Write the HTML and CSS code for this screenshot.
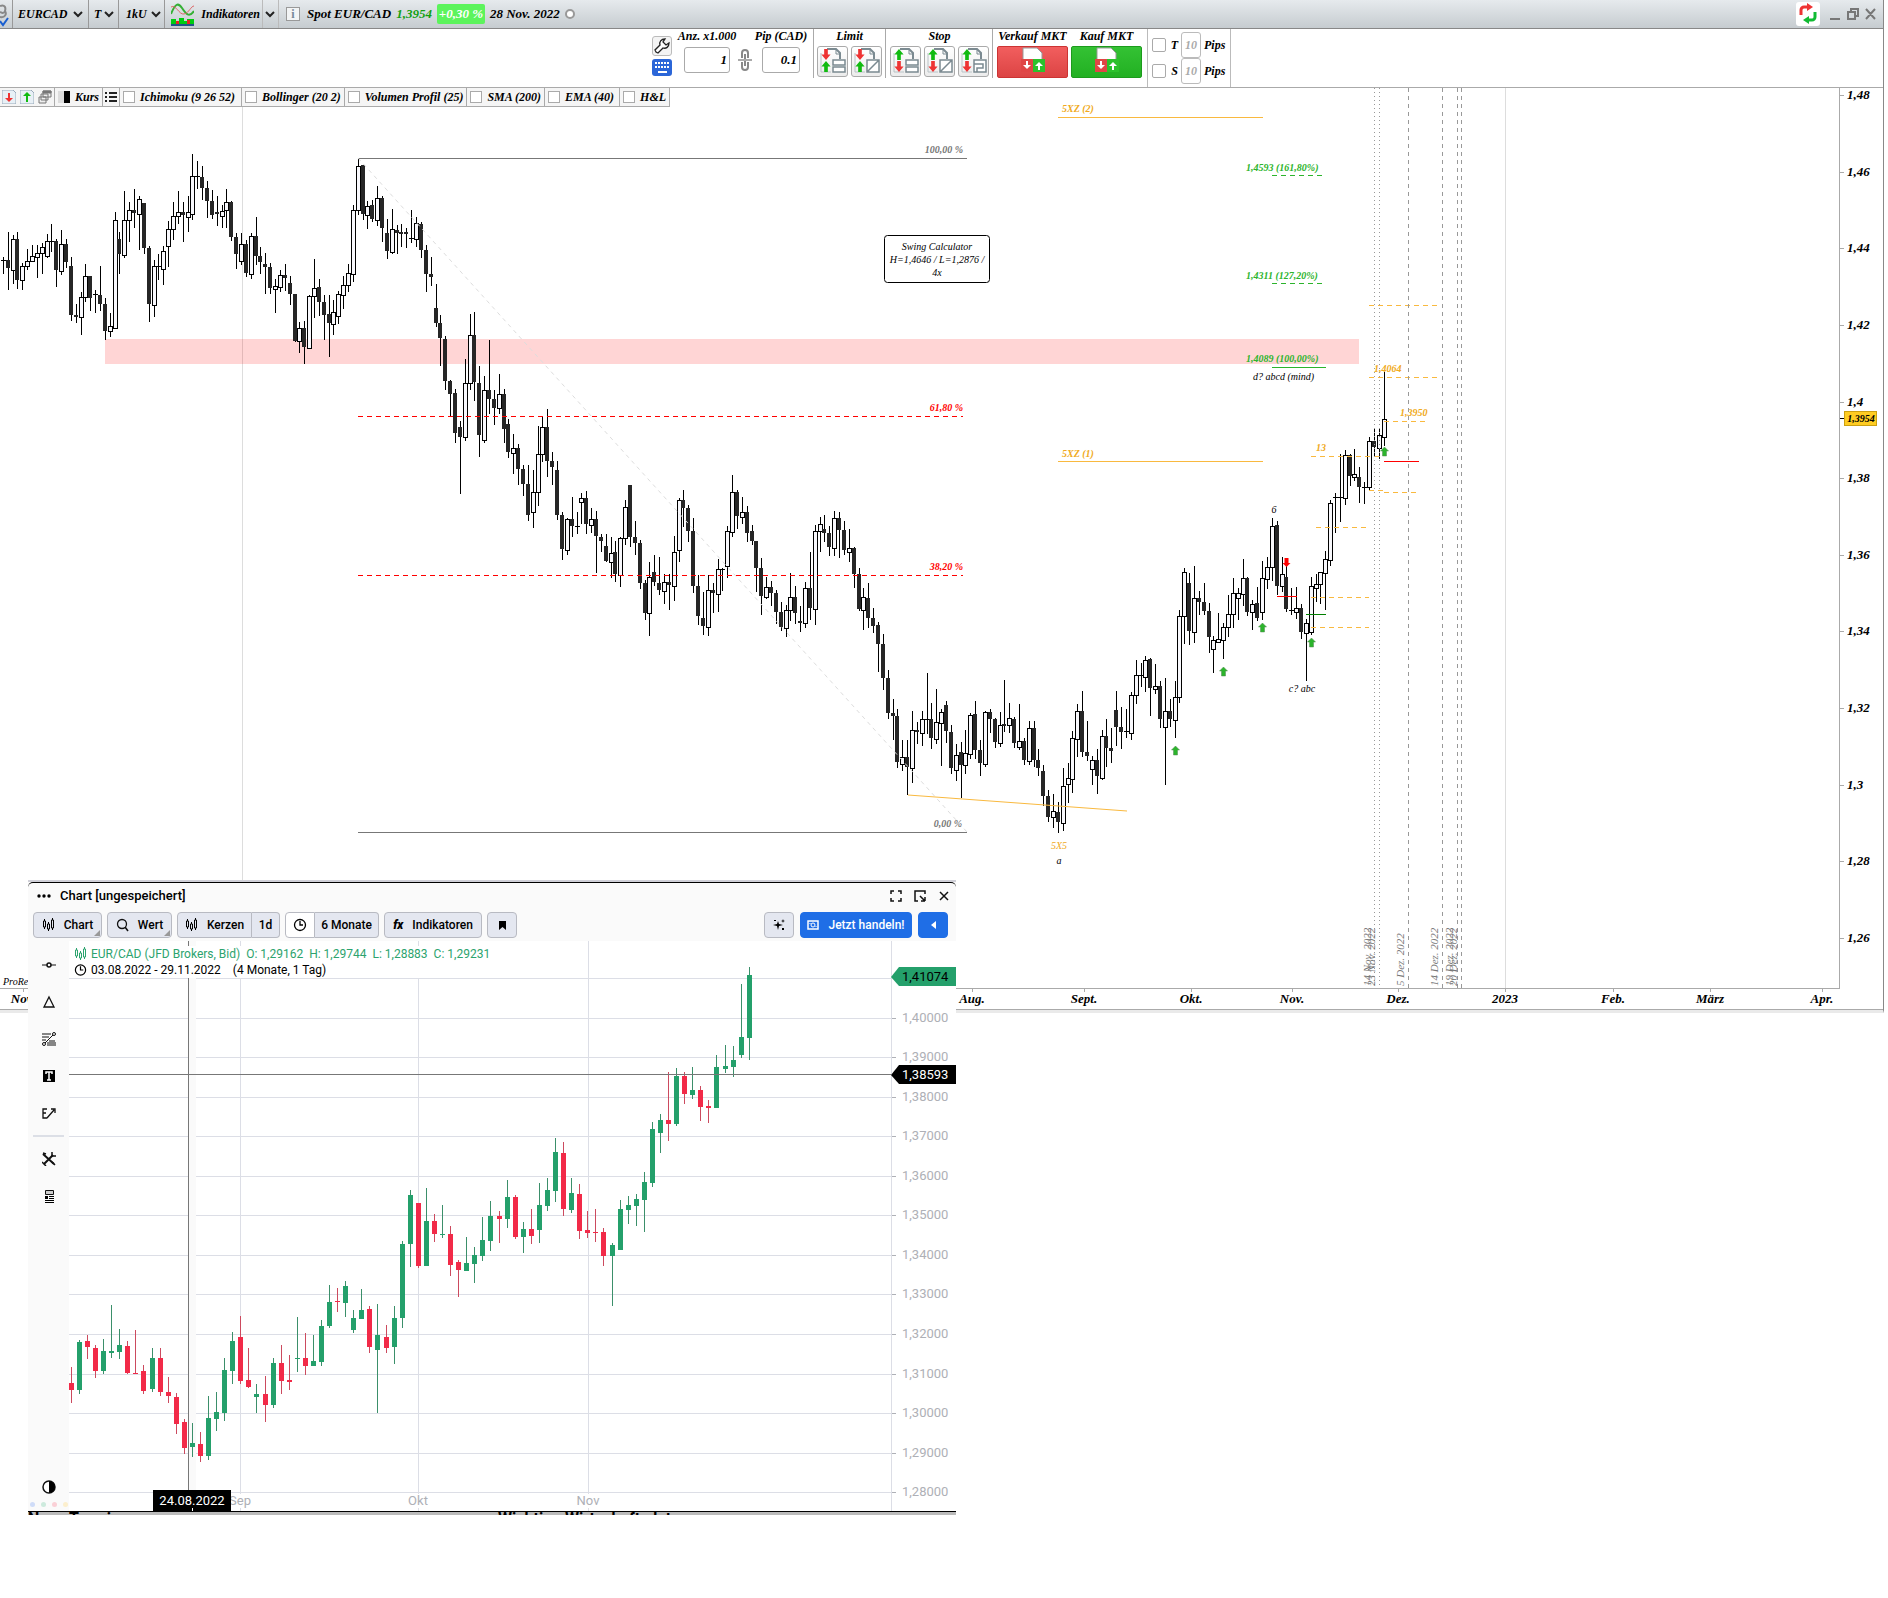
FILE: index.html
```html
<!DOCTYPE html>
<html lang="de">
<head>
    <meta charset="UTF-8">
    <meta name="viewport" content="width=device-width, initial-scale=1.0">
    <title>EURCAD - Spot EUR/CAD</title>
    <link rel="stylesheet" href="styles.css">
</head>
<body>
    <svg class="defs" width="0" height="0" aria-hidden="true">
        <symbol id="i-page" viewBox="0 0 28 28">
            <path d="M8 2h9l4 4v6" fill="none" stroke="#7b8a91" stroke-width="2"/>
            <path d="M17 2v5h5" fill="none" stroke="#7b8a91" stroke-width="1"/>
            <path d="M2 6v19h10" fill="none" stroke="#b9c2c6" stroke-width="1"/>
        </symbol>
        <symbol id="i-up" viewBox="0 0 10 12"><path d="M5 0l5 6H7v6H3V6H0z"/></symbol>
        <symbol id="i-down" viewBox="0 0 10 12"><path d="M5 12l5-6H7V0H3v6H0z"/></symbol>
        <symbol id="i-chev" viewBox="0 0 10 8"><path d="M1 2l4 4 4-4" fill="none" stroke="#222" stroke-width="2"/></symbol>
        <symbol id="i-candles" viewBox="0 0 13 14">
            <path d="M2.500 1v2m0 6v2M6.500 4v2m0 5v2M10.500 0v2m0 8v2" stroke="currentColor"/>
            <path d="M1.500 3h2v6h-2zM5.500 6h2v5h-2zM9.500 2h2v8h-2z" fill="none" stroke="currentColor"/>
        </symbol>
        <symbol id="i-clock" viewBox="0 0 14 14">
            <circle cx="7" cy="7" r="5.500" fill="none" stroke="currentColor" stroke-width="1.300"/>
            <path d="M7 3v4h3" fill="none" stroke="currentColor" stroke-width="1.300"/>
        </symbol>
        <symbol id="i-chain" viewBox="0 0 14 24">
            <path d="M4 10V5a3 3 0 0 1 6 0v5M4 14v5a3 3 0 0 0 6 0v-5M7 6v12" fill="none" stroke="#888" stroke-width="2"/>
            <path d="M0 12h14" stroke="#aaa" stroke-width="2"/>
        </symbol>
        <symbol id="i-mkt" viewBox="0 0 26 26">
            <path d="M3 1h14l5 5v8H3z" fill="#fff" stroke="#999"/>
            <path d="M1 12h12v13H1z" fill="#e04545"/><path d="M13 12h12v13H13z" fill="#2cc12c"/>
            <path d="M7 22l4-4H8v-4H6v4H3zM19 15l4 4h-3v4h-2v-4h-3z" fill="#fff"/>
        </symbol>
    </svg>

    <div class="platform">
        <header class="titlebar">
            <div class="tb tb-link">
                <svg width="10" height="28" viewBox="0 0 10 28"><path d="M0 6c5-2 6 2 5 5s-3 2-5 1m5-1c2 3 0 7-5 6" fill="none" stroke="#888" stroke-width="2"/><path d="M0 21l3 4 5-7" fill="none" stroke="#1a5fd0" stroke-width="2"/></svg>
            </div>
            <button class="tb tb-symbol"><span>EURCAD</span><svg width="10" height="8"><use href="#i-chev"/></svg></button>
            <button class="tb tb-type"><span>T</span><svg width="10" height="8"><use href="#i-chev"/></svg></button>
            <button class="tb tb-unit"><span>1kU</span><svg width="10" height="8"><use href="#i-chev"/></svg></button>
            <button class="tb tb-ind">
                <svg width="23" height="24" viewBox="0 0 23 24">
                    <path d="M0 12C4 2 7 0 11 6s7 10 12 3" fill="none" stroke="#35b035" stroke-width="2"/>
                    <path d="M0 5c5-3 8 8 13 7s7-8 10-8" fill="none" stroke="#d66" stroke-width="1"/>
                    <path d="M0 17h5v2h3v-3h5v3h3v-2h7v6H0z" fill="#0c1"/><path d="M5 19h3v4H5zM16 18h3v5h-3z" fill="#e22"/><path d="M0 23h23" stroke="#258" stroke-width="2"/>
                </svg>
                <span>Indikatoren</span>
            </button>
            <button class="tb tb-more" aria-label="Mehr"><svg width="10" height="8"><use href="#i-chev"/></svg></button>
            <div class="quote">
                <span class="info">i</span>
                <span>Spot EUR/CAD</span>
                <span class="up">1,3954</span>
                <span class="change">+0,30 %</span>
                <span>28 Nov. 2022</span>
                <span class="dot"></span>
            </div>
            <div class="win-actions">
                <svg width="24" height="24" viewBox="0 0 24 24"><rect x="0" y="0" width="24" height="24" rx="3" fill="#fff"/><path d="M5 13V8a3 3 0 0 1 3-3h4" fill="none" stroke="#e33" stroke-width="3"/><path d="M11 1l6 4-6 4z" fill="#e33"/><path d="M19 10v5a3 3 0 0 1-3 3h-4" fill="none" stroke="#1b3" stroke-width="3"/><path d="M13 14v8l-6-4z" fill="#1b3"/></svg>
                <svg width="50" height="14" viewBox="0 0 50 14" fill="none" stroke="#777" stroke-width="2"><path d="M1 12h10M19 5h7v7h-7zM22 5V2h7v7h-3M37 2l9 10m0-10l-9 10"/></svg>
            </div>
        </header>

        <section class="tradebar">
            <div class="tools">
                <button class="sq" aria-label="Einstellungen"><svg width="16" height="16" viewBox="0 0 16 16"><path d="M2 14l-1-2 5-5c-1-3 1-6 5-6L9 4l3 3 3-2c0 4-3 6-6 5l-5 5z" fill="#fff" stroke="#222" stroke-width="1.300"/></svg></button>
                <button class="kbd" aria-label="Tastatur"><svg width="21" height="17" viewBox="0 0 21 17"><path d="M3 4h15M3 8h15" stroke="#fff" stroke-width="2" stroke-dasharray="2 1"/><path d="M6 13h9" stroke="#fff" stroke-width="2"/></svg></button>
            </div>
            <div class="field qty">
                <label for="qty">Anz. x1.000</label>
                <input id="qty" type="text" value="1">
            </div>
            <svg class="chain" width="14" height="24"><use href="#i-chain"/></svg>
            <div class="field pip">
                <label for="pip">Pip (CAD)</label>
                <input id="pip" type="text" value="0.1">
            </div>
            <div class="group first">
                <span>Limit</span>
                <div class="btns" id="limit"></div>
            </div>
            <div class="group">
                <span>Stop</span>
                <div class="btns" id="stop"></div>
            </div>
            <div class="group last">
                <div class="market"><label for="sell">Verkauf MKT</label><button id="sell" class="sell"><svg width="26" height="26"><use href="#i-mkt"/></svg></button></div>
                <div class="market"><label for="buy">Kauf MKT</label><button id="buy" class="buy"><svg width="26" height="26"><use href="#i-mkt"/></svg></button></div>
            </div>
            <div class="targets">
                <div class="target"><input type="checkbox" id="t"><label for="t">T</label><input type="text" aria-label="T Pips" value="10"><span>Pips</span></div>
                <div class="target"><input type="checkbox" id="s"><label for="s">S</label><input type="text" aria-label="S Pips" value="10"><span>Pips</span></div>
            </div>
        </section>

        <main class="chart">
            <svg class="plot" id="plot" role="img" aria-label="EUR/CAD Tageschart"></svg>
            <svg class="price-axis" id="price-axis"></svg>
            <div class="indicators">
                <div class="ind-icons">
                    <svg width="14" height="14" viewBox="0 0 14 14"><path d="M0 0h11l3 3v11H0z" fill="#e8f0f6" stroke="#9ab"/><path d="M7 12L3 8h3V3h2v5h3z" fill="#e33"/></svg>
                    <svg width="14" height="14" viewBox="0 0 14 14"><path d="M0 0h11l3 3v11H0z" fill="#e8f0f6" stroke="#9ab"/><path d="M7 2l4 4H8v6H6V6H3z" fill="#1b1"/></svg>
                    <svg width="14" height="14" viewBox="0 0 14 14" fill="#eee" stroke="#777"><path d="M5 1h8v6H5zM3 4h7v6H3zM1 7h7v6H1z"/><path d="M5 1h8v2H5z" fill="#777"/></svg>
                </div>
                <div class="ind-price"><i></i><span>Kurs</span></div>
                <div class="ind-list"><svg width="12" height="12" viewBox="0 0 12 12"><path d="M0 2h2M4 2h8M0 6h2M4 6h8M0 10h2M4 10h8" stroke="#222" stroke-width="2"/></svg></div>
                <label class="long"><input type="checkbox"><span>Ichimoku (9 26 52)</span></label>
                <label class="mid"><input type="checkbox"><span>Bollinger (20 2)</span></label>
                <label class="long"><input type="checkbox"><span>Volumen Profil (25)</span></label>
                <label class="short"><input type="checkbox"><span>SMA (200)</span></label>
                <label class="short"><input type="checkbox"><span>EMA (40)</span></label>
                <label><input type="checkbox"><span>H&amp;L</span></label>
            </div>
        </main>
        <svg class="time-axis" id="time-axis"></svg>
    </div>

    <section class="window">
        <div class="win-title">
            <svg class="dots" width="14" height="4" viewBox="0 0 14 4"><circle cx="2" cy="2" r="1.700"/><circle cx="7" cy="2" r="1.700"/><circle cx="12" cy="2" r="1.700"/></svg>
            <h2>Chart [ungespeichert]</h2>
            <div class="win-icons">
                <button aria-label="Vollbild"><svg width="12" height="12" viewBox="0 0 12 12"><path d="M1 4V1h3M8 1h3v3M11 8v3H8M4 11H1V8" fill="none" stroke="#111" stroke-width="1.500"/></svg></button>
                <button aria-label="Verkleinern"><svg width="12" height="12" viewBox="0 0 12 12"><path d="M11 4V1H1v10h3M11 11V7M11 11H7M6 6l5 5" fill="none" stroke="#111" stroke-width="1.500"/></svg></button>
                <button aria-label="Schließen"><svg width="12" height="12" viewBox="0 0 12 12"><path d="M2 2l8 8m0-8l-8 8" stroke="#111" stroke-width="1.500"/></svg></button>
            </div>
        </div>
        <div class="win-tools">
            <button class="btn menu w69"><svg width="13" height="14"><use href="#i-candles"/></svg>Chart</button>
            <button class="btn menu w65"><svg width="13" height="14" viewBox="0 0 13 14"><circle cx="6" cy="6" r="4.500" fill="none" stroke="#111" stroke-width="1.300"/><path d="M9 9l3 4" stroke="#111" stroke-width="1.500"/></svg>Wert</button>
            <div class="split">
                <button class="btn w75"><svg width="13" height="14"><use href="#i-candles"/></svg>Kerzen</button>
                <button class="btn w28">1d</button>
            </div>
            <div class="split">
                <button class="btn light w30" aria-label="Zeitraum"><svg width="14" height="14"><use href="#i-clock"/></svg></button>
                <button class="btn w64">6 Monate</button>
            </div>
            <button class="btn w98"><b class="fx">fx</b>Indikatoren</button>
            <button class="btn w30" aria-label="Merken"><svg width="7" height="9" viewBox="0 0 7 9"><path d="M0 0h7v9L3.500 6 0 9z"/></svg></button>
            <span class="spacer"></span>
            <button class="btn w30" aria-label="Assistent"><svg width="12" height="12" viewBox="0 0 12 12"><path d="M5 2l1 3 4 1-4 1-1 4-1-4-4-1 4-1zM10 0l.500 1.500L12 2l-1.500.500L10 4l-.500-1.500L8 2l1.500-.500zM1 1h2v1H1zM9 9h2v2H9z"/></svg></button>
            <button class="btn blue w112"><svg width="12" height="10" viewBox="0 0 12 10"><path d="M1 1h10v8H1z" fill="none" stroke="#fff" stroke-width="1.500"/><circle cx="6" cy="5" r="2" fill="none" stroke="#fff"/><path d="M3 3v1M9 6v1" stroke="#fff"/></svg>Jetzt handeln!</button>
            <button class="btn blue w30" aria-label="Zurück"><svg width="5" height="8" viewBox="0 0 5 8"><path d="M5 0v8L0 4z" fill="#fff"/></svg></button>
        </div>
        <div class="win-body">
            <nav class="side">
                <svg width="14" height="14" viewBox="0 0 14 14"><path d="M0 7h5m4 0h5" stroke="#111"/><circle cx="7" cy="7" r="2" fill="none" stroke="#111" stroke-width="1.500"/></svg>
                <svg width="14" height="14" viewBox="0 0 14 14"><path d="M7 2l5 10H2z" fill="none" stroke="#111" stroke-width="1.300"/></svg>
                <svg width="14" height="14" viewBox="0 0 14 14"><path d="M0 2h9M0 5h7M0 8h4M7 9h6M5 11h9M5 13h9M3 11l8-8" stroke="#111"/><circle cx="12" cy="2" r="1.500" fill="none" stroke="#111"/><circle cx="2" cy="12" r="1.500" fill="none" stroke="#111"/></svg>
                <svg width="14" height="14" viewBox="0 0 14 14"><path d="M1 1h12v12H1z"/><path d="M4 5V3h6v2M7 3v8M5 11h4" fill="none" stroke="#fff" stroke-width="1.500"/></svg>
                <svg width="14" height="14" viewBox="0 0 14 14"><path d="M5 3H1v9h4M1 7h3M5 12L12 4M9 3h4v4" fill="none" stroke="#111" stroke-width="1.300"/></svg>
                <hr>
                <svg width="14" height="14" viewBox="0 0 14 14"><path d="M1 2l11 10M2 12L11 3" stroke="#111" stroke-width="2"/><path d="M10 0v4h4M0 10l4 4M10 10l3 3M1 1l3 1" fill="none" stroke="#111" stroke-width="1.500"/></svg>
                <svg width="14" height="14" viewBox="0 0 14 14"><path d="M3.500 1.500h8v4h-8z" fill="#ccc" stroke="#111"/><path d="M3 7h3v3H3zM7 7h5v1H7zM7 9h5v1H7zM3 11h9v1H3zM3 13h9v1H3z"/></svg>
                <svg class="contrast" width="14" height="14" viewBox="0 0 14 14"><circle cx="7" cy="7" r="6" fill="#fff" stroke="#111" stroke-width="1.500"/><path d="M7 1a6 6 0 0 1 0 12z"/></svg>
                <div class="colors"><i></i><i></i><i></i><i></i></div>
            </nav>
            <div class="mini">
                <svg id="mini" role="img" aria-label="EUR/CAD Kerzenchart"></svg>
                <div class="legend">
                    <div class="legend-row green"><svg width="13" height="14"><use href="#i-candles"/></svg><span>EUR/CAD (JFD Brokers, Bid)</span><span>O: 1,29162</span><span>H: 1,29744</span><span>L: 1,28883</span><span>C: 1,29231</span></div>
                    <div class="legend-row period"><svg width="13" height="14" viewBox="0 0 14 14"><use href="#i-clock"/></svg><span>03.08.2022 - 29.11.2022</span><span>(4 Monate, 1 Tag)</span></div>
                </div>
            </div>
        </div>
        <div class="below"><span>Neue Termine</span><span>Wichtige Wirtschaftsdaten</span></div>
    </section>

    <script src="chart.js"></script>
</body>
</html>
```
FILE: styles.css
```css
* {
    box-sizing: border-box;
}
body {
    margin: 0;
    background: #fff;
    color: #000;
    font-family: "Liberation Serif", serif;
}
button, input {
    font: inherit;
    color: inherit;
    margin: 0;
    padding: 0;
}
svg {
    flex: none;
}
.defs {
    position: absolute;
}

/* trading platform */
.platform {
    margin-right: 4px;
    border-right: 1px solid #888;
    border-bottom: 3px solid #eaeaea;
    font-size: 13px;
    font-weight: bold;
    font-style: italic;
    white-space: nowrap;
}
.titlebar {
    display: flex;
    height: 29px;
    background: linear-gradient(#e6eaed, #c6ccd0);
    border-bottom: 1px solid #888;
}
.tb {
    display: flex;
    flex: none;
    align-items: center;
    justify-content: space-between;
    border: 0;
    border-right: 1px solid #999;
    background: none;
    padding: 0 5px;
    font-size: 12px;
}
.tb-link {
    width: 13px;
    padding: 0;
}
.tb-symbol { width: 76px; }
.tb-type { width: 30px; padding-right: 4px; }
.tb-unit { width: 46px; padding: 0 3px 0 7px; }
.tb-ind { width: 98px; padding: 0 2px 0 6px; border-color: #bbb; }
.tb-more { width: 16px; padding: 0 2px; border-color: #bbb; }
.quote {
    display: flex;
    align-items: center;
    gap: 5px;
    padding-left: 7px;
}
.quote .info {
    width: 14px;
    height: 14px;
    margin-right: 2px;
    border: 1px solid #999;
    background: #f2f4f5;
    color: #789;
    font-style: normal;
    font-size: 12px;
    line-height: 12px;
    text-align: center;
}
.up {
    color: #12a012;
}
.change {
    width: 48px;
    height: 20px;
    line-height: 20px;
    border-radius: 2px;
    background: #5cf45c;
    color: #fff;
    text-align: center;
}
.dot {
    width: 10px;
    height: 10px;
    border: 2px solid #999;
    border-radius: 50%;
    background: #fff;
}
.win-actions {
    display: flex;
    align-items: center;
    gap: 9px;
    margin-left: auto;
    margin-right: 4px;
}
.tradebar {
    display: flex;
    justify-content: center;
    height: 59px;
    border-bottom: 1px solid #aaa;
}
.tools {
    display: flex;
    flex-direction: column;
    gap: 3px;
    padding: 7px 5px 0 0;
}
.sq, .kbd {
    display: flex;
    width: 20px;
    height: 20px;
    align-items: center;
    justify-content: center;
    border: 1px solid #bbb;
    border-radius: 3px;
    background: #f4f4f4;
}
.kbd {
    height: 17px;
    border: 0;
    background: #2b66d8;
}
.field {
    display: flex;
    flex-direction: column;
    align-items: center;
}
.qty { width: 60px; }
.pip { width: 52px; }
.field label, .group > span, .market label {
    height: 17px;
    line-height: 15px;
    font-size: 12px;
}
.field input {
    width: 46px;
    height: 26px;
    border: 1px solid #aaa;
    border-radius: 3px;
    text-align: right;
    padding-right: 2px;
    margin-top: 1px;
}
.pip input {
    width: 38px;
}
.chain {
    margin: 19px 3px 0 1px;
}
.group {
    display: flex;
    flex-direction: column;
    align-items: center;
    padding: 0 3px;
    border-right: 1px solid #aaa;
    height: 49px;
    margin-right: 1px;
}
.group.first {
    margin-left: 6px;
    border-left: 1px solid #aaa;
}
.btns {
    display: flex;
    gap: 3px;
}
.btns button {
    width: 31px;
    height: 31px;
    border: 1px solid #aaa;
    border-radius: 3px;
    background: linear-gradient(#fff, #ececec);
}
.group.last {
    flex-direction: row;
    gap: 3px;
    border: 0;
    padding-right: 4px;
}
.market {
    display: flex;
    flex-direction: column;
    align-items: center;
}
.market button {
    width: 71px;
    height: 32px;
    border: 1px solid #c33;
    border-radius: 2px;
    background: linear-gradient(#f25e5e, #dc4444);
}
.market .buy {
    border-color: #1c9b1c;
    background: linear-gradient(#34c234, #22b022);
}
.targets {
    border-left: 1px solid #bbb;
    border-right: 1px solid #bbb;
    padding: 3px 4px 0;
    width: 84px;
}
.target {
    display: flex;
    align-items: center;
    gap: 3px;
    height: 26px;
    font-size: 12px;
}
.target label {
    width: 9px;
    text-align: right;
}
.target input[type=text] {
    width: 20px;
    height: 26px;
    border: 1px solid #bbb;
    border-radius: 3px;
    color: #aaa;
    text-align: center;
}
input[type=checkbox] {
    appearance: none;
    flex: none;
    width: 14px;
    height: 14px;
    border: 1px solid #aaa;
    border-radius: 2px;
    background: #fff;
}
.chart {
    position: relative;
    display: flex;
}
.plot {
    flex: 1;
    min-width: 0;
    height: 901px;
    border-right: 1px solid #aaa;
    border-bottom: 1px solid #aaa;
}
.price-axis {
    width: 43px;
    height: 901px;
}
.time-axis {
    display: block;
    width: 100%;
    height: 21px;
    border-bottom: 1px solid #aaa;
}
.indicators {
    position: absolute;
    top: 0;
    left: 0;
    display: flex;
    height: 19px;
    background: #f5f5f5;
    border-bottom: 1px solid #aaa;
    font-size: 12px;
}
.indicators > * {
    display: flex;
    align-items: center;
    gap: 5px;
    padding: 0 3px;
    border-right: 1px solid #aaa;
}
.indicators .ind-icons {
    gap: 4px;
    padding: 0 2px;
}
.indicators input {
    width: 12px;
    height: 12px;
    border-radius: 0;
}
.indicators .ind-list {
    padding: 0 2px;
}
.indicators .long { min-width: 122px; }
.indicators .mid { min-width: 100px; }
.indicators .short { min-width: 75px; }
.ind-price i {
    width: 12px;
    height: 12px;
    border-left: 6px solid #ddd;
    background: #000;
}
svg text {
    white-space: pre;
}
.small {
    font-size: 10px;
}
.note {
    font-size: 10px;
    font-weight: normal;
}
.date {
    font-size: 11px;
    font-weight: normal;
    fill: #777;
}

/* floating chart window */
.window {
    position: absolute;
    top: 880px;
    left: 28px;
    width: 928px;
    background: #fafafa;
    border-top: 2px solid #d0d0d8;
    font-family: Roboto, sans-serif;
    font-size: 12px;
}
.win-title {
    display: flex;
    align-items: center;
    height: 26px;
    padding: 0 6px 0 9px;
    border-top: 1px solid #000;
    border-radius: 5px 5px 0 0;
}
.dots {
    margin-right: 9px;
}
h2 {
    margin: 0;
    font-size: 13px;
    font-weight: 500;
}
.win-icons {
    display: flex;
    gap: 12px;
    margin-left: auto;
}
.win-icons button {
    display: flex;
    border: 0;
    background: none;
}
.win-tools {
    display: flex;
    gap: 5px;
    height: 33px;
    padding: 4px 8px 3px 5px;
}
.btn {
    position: relative;
    display: flex;
    align-items: center;
    justify-content: center;
    gap: 9px;
    border: 1px solid #b8bac2;
    border-radius: 4px;
    background: #e4e7f0;
    font-weight: 500;
    white-space: nowrap;
    height: 26px;
}
.w28 { width: 28px; }
.w30 { width: 30px; }
.w64 { width: 64px; }
.w65 { width: 65px; }
.w69 { width: 69px; }
.w75 { width: 75px; }
.w98 { width: 98px; }
.w112 { width: 112px; }
.menu::after {
    content: "";
    position: absolute;
    right: 1px;
    bottom: 1px;
    border: 3px solid transparent;
    border-right-color: #999;
    border-bottom-color: #999;
}
.split {
    display: flex;
}
.split .btn:first-child {
    border-radius: 4px 0 0 4px;
}
.split .btn:last-child {
    border-left: 0;
    border-radius: 0 4px 4px 0;
}
.btn.light {
    background: #fff;
}
.btn.blue {
    border-color: #1f6ee6;
    background: #1f6ee6;
    color: #fff;
    margin-left: 1px;
}
.fx {
    font-style: italic;
    font-weight: 900;
}
.spacer {
    flex: 1;
}
.win-body {
    display: flex;
    border-bottom: 1px solid #000;
    height: 571px;
}
.side {
    display: flex;
    flex-direction: column;
    align-items: center;
    gap: 23px;
    width: 41px;
    padding-top: 17px;
}
.side hr {
    width: 31px;
    height: 2px;
    margin: -8px 0;
    border: 0;
    background: #dcdfe6;
}
.side .contrast {
    margin-top: auto;
    margin-bottom: -15px;
}
.colors {
    display: flex;
    gap: 6px;
    padding-bottom: 4px;
}
.colors i {
    width: 5px;
    height: 5px;
    border-radius: 50%;
    background: #cfdcf8;
}
.colors i:nth-child(2) { background: #cdeadd; }
.colors i:nth-child(3) { background: #fad0d6; }
.colors i:nth-child(4) { background: #fcefcd; }
.mini {
    position: relative;
    flex: 1;
    display: flex;
    background: #fff;
}
.mini > svg {
    width: 100%;
    height: 100%;
}
.num {
    font-size: 13px;
}
.legend {
    position: absolute;
    top: 5px;
    left: 5px;
    background: #fff;
}
.legend-row {
    display: flex;
    align-items: center;
    gap: 6px;
    height: 16px;
}
.period {
    gap: 12px;
}
.legend-row svg + span {
    margin-left: -2px;
}
.period svg + span {
    margin-left: -8px;
}
.green {
    color: #2ca36e;
}
/* strip of the page behind the window */
.below {
    display: grid;
    grid-template-columns: 470px 1fr;
    height: 3px;
    overflow: hidden;
    background: #bbb;
    font-size: 16px;
    font-weight: bold;
    line-height: 13px;
}
```
FILE: chart.js
```js
// [high, bodyTop, bodyBottom, low, rising]
const DAILY = [
[257,260,261,274,0],[232,260,268,290,0],[235,239,270,284,1],[232,239,280,289,0],[263,266,280,290,1],[249,261,266,270,1],[245,256,261,262,1],[245,253,257,278,1],
[243,247,253,274,1],[234,241,256,258,1],[224,241,242,252,0],[239,241,270,287,0],[230,244,271,275,1],[239,244,262,268,0],[257,266,315,321,0],[304,315,317,323,0],
[292,297,317,335,1],[264,276,297,302,1],[276,276,298,311,0],[290,294,295,313,0],[266,295,304,311,0],[298,304,331,340,0],[313,326,331,337,1],[212,220,328,329,1],
[232,239,254,274,0],[191,220,255,258,1],[202,210,220,242,1],[189,210,213,228,0],[196,199,214,250,1],[203,203,248,254,0],[246,248,304,322,0],[260,266,305,317,1],
[254,266,267,280,0],[246,251,269,285,1],[221,229,246,267,1],[202,216,229,240,1],[191,212,216,224,1],[202,212,215,242,0],[196,212,217,232,1],[154,176,214,220,1],
[161,176,177,189,0],[166,177,188,200,0],[181,188,201,218,0],[190,201,215,219,0],[196,212,214,226,0],[205,211,216,228,1],[189,202,210,228,1],[201,202,237,241,0],
[233,237,254,269,0],[233,244,261,265,1],[240,244,273,277,0],[233,236,274,279,1],[217,236,256,265,0],[247,256,262,274,0],[253,264,267,294,0],[263,267,288,294,0],
[279,286,289,313,1],[270,275,287,292,1],[264,275,278,291,0],[276,283,294,305,0],[294,294,341,342,0],[322,328,341,353,1],[321,328,347,364,0],[295,296,348,349,1],
[259,288,296,318,1],[279,287,302,316,0],[295,302,315,340,0],[295,314,323,357,0],[300,312,324,335,1],[291,294,316,324,1],[276,285,295,309,1],[264,273,285,292,1],
[205,210,274,282,1],[159,166,210,215,1],[165,165,214,220,0],[201,206,215,229,1],[200,205,219,222,0],[186,198,220,226,1],[196,198,228,242,0],[219,233,251,259,0],
[209,229,252,254,1],[225,230,233,254,0],[224,232,234,247,0],[228,232,234,248,0],[210,238,239,243,0],[217,223,239,247,1],[222,224,250,258,0],[245,250,274,292,0],
[257,274,277,286,0],[284,308,323,327,0],[315,323,338,366,0],[336,339,381,390,0],[380,381,394,416,0],[389,393,433,443,0],[421,427,437,494,0],[359,383,437,441,1],
[314,335,383,390,1],[312,335,382,401,0],[366,383,435,457,0],[376,390,440,443,1],[340,390,399,414,0],[390,399,408,425,0],[374,394,408,414,1],[389,394,429,443,0],
[419,424,452,458,0],[434,448,453,474,1],[444,448,469,485,0],[465,469,484,496,0],[465,484,515,521,0],[470,492,512,528,1],[426,454,492,506,1],[417,427,454,462,1],
[409,427,461,477,0],[452,461,467,485,0],[461,470,515,520,0],[512,515,549,560,0],[518,519,550,555,1],[497,519,526,537,0],[512,526,527,534,0],[493,498,502,524,1],
[491,498,524,534,0],[508,519,525,533,1],[511,519,536,573,0],[534,537,541,552,0],[534,546,561,562,0],[537,553,562,578,1],[541,552,574,582,0],[537,538,575,587,1],
[500,507,538,545,1],[485,485,537,547,0],[521,537,543,555,0],[540,543,583,589,0],[580,583,613,620,0],[562,577,613,636,1],[555,572,582,586,0],[557,583,590,595,0],
[574,582,591,604,1],[574,582,585,610,0],[536,552,586,601,1],[498,500,550,562,1],[490,500,508,527,0],[505,508,531,542,0],[518,531,586,593,0],[575,586,616,625,0],
[592,618,626,635,0],[575,590,627,636,1],[583,590,593,613,0],[559,569,594,612,1],[568,569,570,591,0],[526,531,566,578,1],[475,492,532,537,1],[490,492,516,529,0],
[497,512,517,524,1],[506,512,533,542,0],[525,531,541,545,0],[541,541,568,592,0],[558,568,596,615,0],[577,587,597,599,1],[581,587,593,606,0],[590,593,612,624,0],
[602,612,627,631,0],[605,610,628,637,1],[573,597,610,621,1],[586,597,613,624,0],[606,621,623,632,0],[582,588,623,628,1],[552,588,608,620,0],[525,531,609,625,1],
[517,524,531,552,1],[515,529,533,542,0],[526,533,547,556,0],[511,518,548,556,1],[512,518,530,558,0],[521,530,550,555,0],[529,548,552,562,1],[547,548,574,588,0],
[568,574,609,611,0],[588,597,610,630,1],[583,598,618,628,0],[608,618,626,633,0],[622,625,644,672,0],[634,644,678,690,0],[670,678,713,719,0],[699,713,716,740,0],
[709,716,762,768,0],[740,757,764,771,1],[740,757,767,795,0],[711,730,768,783,1],[722,730,732,744,0],[711,719,733,746,1],[673,719,720,734,0],[703,719,738,749,0],
[689,722,739,744,1],[709,712,723,766,1],[701,705,731,743,0],[725,732,768,774,0],[744,755,770,781,1],[742,752,765,798,0],[730,753,765,774,1],[713,715,754,759,1],
[701,714,750,759,0],[740,750,763,776,0],[711,712,764,767,1],[709,712,719,733,0],[718,719,742,748,0],[712,725,743,747,1],[680,724,726,732,0],[703,718,725,733,1],
[717,719,743,748,0],[704,741,747,750,1],[738,741,760,765,0],[721,728,761,765,1],[721,728,760,767,0],[749,760,768,776,0],[765,771,796,806,0],[790,796,817,822,0],
[794,811,817,828,1],[802,812,822,833,0],[768,786,823,831,1],[763,778,784,803,1],[731,738,779,793,1],[704,711,739,757,1],[691,711,752,757,0],[721,752,756,761,0],
[756,760,769,785,1],[749,760,776,794,0],[730,736,778,780,1],[719,736,748,767,0],[728,748,751,763,0],[691,710,727,746,0],[707,727,732,749,0],[709,731,732,738,0],
[692,695,733,740,1],[660,675,695,704,1],[663,675,676,687,0],[656,660,677,692,1],[658,659,688,716,0],[664,686,689,694,1],[681,686,719,728,0],[678,711,727,785,1],
[699,711,719,727,0],[681,697,720,738,1],[610,616,697,703,1],[568,572,616,644,1],[573,583,631,645,0],[566,598,632,643,1],[591,598,602,615,0],[583,602,611,615,0],
[603,611,637,653,0],[636,640,649,673,1],[613,639,642,642,1],[623,627,640,659,1],[595,614,627,637,1],[578,593,614,628,1],[588,593,598,620,1],[559,578,594,606,1],
[577,578,612,616,0],[600,604,612,630,1],[587,603,618,621,0],[561,578,612,620,1],[557,567,579,589,1],[518,526,567,581,1],[521,525,586,595,0],[557,574,586,592,1],
[565,577,609,612,0],[588,610,611,615,0],[587,608,612,619,1],[604,608,632,639,0],[619,623,633,681,1],[577,586,632,635,1],[574,584,588,602,1],[572,572,584,604,1],
[551,559,573,610,1],[500,503,560,566,1],[493,497,498,533,0],[454,497,498,522,0],[450,455,498,505,1],[454,455,476,486,0],[449,474,477,481,1],[467,477,487,503,0],
[482,487,488,504,0],[437,441,487,490,1],[428,441,447,457,0],[428,435,448,459,1],[372,419,437,446,1]
];

const RECENT = [
[1367,1383,1390,1403,0],[1340,1342,1390,1394,1],[1335,1341,1347,1359,0],[1345,1348,1371,1378,0],[1339,1351,1371,1374,1],[1305,1351,1353,1358,1],[1329,1345,1352,1359,1],
[1341,1346,1373,1374,0],[1330,1373,1374,1374,0],[1365,1371,1391,1394,0],[1348,1358,1389,1392,1],[1348,1358,1392,1396,0],[1377,1392,1396,1403,0],[1393,1397,1424,1434,0],
[1419,1422,1448,1454,0],[1423,1443,1447,1457,1],[1432,1444,1456,1462,0],[1396,1418,1456,1460,1],[1392,1412,1419,1431,1],[1358,1370,1413,1421,1],[1332,1341,1371,1384,1],
[1316,1337,1381,1384,0],[1348,1380,1387,1388,0],[1384,1394,1397,1413,1],[1376,1394,1405,1422,0],[1358,1363,1405,1408,1],[1345,1363,1381,1394,0],[1355,1380,1382,1390,0],
[1317,1358,1359,1372,1],[1333,1358,1366,1375,0],[1335,1361,1366,1366,1],[1320,1326,1362,1366,1],[1285,1302,1326,1328,1],[1288,1301,1302,1312,0],[1281,1286,1303,1317,1],
[1310,1318,1330,1333,1],[1289,1310,1319,1319,1],[1306,1309,1347,1353,0],[1304,1335,1350,1413,1],[1325,1337,1348,1353,0],[1306,1318,1347,1364,1],[1241,1244,1318,1328,1],
[1190,1195,1244,1267,1],[1203,1203,1266,1268,0],[1188,1221,1266,1266,1],[1214,1221,1234,1242,0],[1205,1234,1235,1238,1],[1226,1234,1265,1276,0],[1260,1262,1270,1297,0],
[1237,1263,1271,1271,1],[1247,1255,1264,1283,1],[1217,1240,1256,1261,1],[1201,1216,1241,1251,1],[1211,1216,1219,1243,0],[1180,1197,1219,1228,1],[1195,1197,1237,1239,0],
[1222,1229,1237,1253,1],[1209,1229,1236,1244,0],[1183,1205,1230,1243,1],[1178,1190,1206,1211,1],[1138,1152,1191,1202,1],[1142,1153,1209,1216,0],[1178,1193,1210,1213,1],
[1184,1194,1231,1239,0],[1211,1230,1233,1238,0],[1209,1232,1233,1242,0],[1228,1232,1256,1266,0],[1243,1245,1256,1306,1],[1200,1209,1250,1250,1],[1196,1205,1210,1224,1],
[1194,1199,1206,1226,1],[1172,1182,1200,1232,1],[1122,1129,1183,1187,1],[1114,1120,1133,1153,1],[1072,1120,1124,1141,0],[1068,1076,1124,1126,1],[1072,1076,1094,1104,0],
[1067,1090,1095,1099,1],[1086,1090,1107,1121,0],[1100,1106,1108,1123,0],[1055,1067,1108,1108,1],[1045,1066,1069,1073,1],[1046,1060,1067,1077,1],[984,1037,1055,1058,1],
[967,975,1038,1060,1]
];

const rect = (x, y, w, h, fill, extra = '') =>
    `<rect x="${x}" y="${y}" width="${w}" height="${h}" fill="${fill}" ${extra}/>`;
const hline = (x1, x2, y, color, dash = '') =>
    `<path d="M${x1} ${y + 0.5}H${x2}" stroke="${color}" stroke-dasharray="${dash}"/>`;
const vline = (x, y1, y2, color, dash = '') =>
    `<path d="M${x + 0.5} ${y1}V${y2}" stroke="${color}" stroke-dasharray="${dash}"/>`;
const text = (x, y, str, fill = '#000', cls = '', anchor = 'start') =>
    `<text x="${x}" y="${y}" fill="${fill}" class="${cls}" text-anchor="${anchor}">${str}</text>`;
const put = (id, x, y, html) => {
    document.getElementById(id).innerHTML = `<g transform="translate(${-x} ${-y})">${html}</g>`;
};

const ORANGE = '#f9b93f';
const GOLD = '#f0aa20';
const GREEN = '#2cb42c';
const DASH = '5 4';

function drawPlot() {
    let s = vline(242, 88, 988, '#ddd') + vline(1505, 88, 988, '#ddd');
    s += rect(105, 339, 1254, 25, '#ff0000', 'opacity="0.165"');

    DAILY.forEach(([hi, top, bot, lo, up], i) => {
        const x = Math.floor(3.3 + i * 4.862);
        s += rect(x, hi, 1, lo - hi, '#000');
        if (bot - top < 2) {
            s += rect(x - 2, top, 5, 1, '#000');
        } else if (up) {
            s += rect(x - 1.5, top + 0.5, 4, bot - top, '#f8f8fc', 'stroke="#000"');
        } else {
            s += rect(x - 2, top, 4, bot - top, '#262626');
        }
    });

    // fibonacci retracement
    s += hline(358, 967, 158, '#777') + text(963, 153, '100,00 %', '#777', 'small', 'end');
    s += hline(358, 967, 832, '#777') + text(962, 827, '0,00 %', '#777', 'small', 'end');
    s += hline(358, 963, 416, '#f00', DASH) + text(963, 411, '61,80 %', '#f00', 'small', 'end');
    s += hline(358, 963, 575, '#f00', DASH) + text(963, 570, '38,20 %', '#f00', 'small', 'end');
    s += `<path d="M358 158L967 832" stroke="#ddd" stroke-dasharray="4 4"/>`;

    s += rect(884.5, 235.5, 105, 47, '#fff', 'rx="3" stroke="#000"');
    s += text(937, 250, 'Swing Calculator', '#000', 'note', 'middle');
    s += text(937, 263, 'H=1,4646 / L=1,2876 /', '#000', 'note', 'middle');
    s += text(937, 276, '4x', '#000', 'note', 'middle');

    // targets
    s += hline(1058, 1263, 117, ORANGE) + text(1062, 112, '5XZ (2)', GOLD, 'small');
    s += hline(1058, 1263, 461, ORANGE) + text(1062, 457, '5XZ (1)', GOLD, 'small');
    s += hline(1272, 1324, 175, GREEN, DASH) + text(1246, 171, '1,4593 (161,80%)', GREEN, 'small');
    s += hline(1272, 1324, 283, GREEN, DASH) + text(1246, 279, '1,4311 (127,20%)', GREEN, 'small');
    s += hline(1272, 1326, 367, GREEN) + text(1246, 362, '1,4089 (100,00%)', GREEN, 'small');
    s += text(1253, 380, 'd? abcd (mind)', '#000', 'note');
    s += text(1274, 513, '6', '#000', 'note', 'middle') + text(1302, 692, 'c? abc', '#000', 'note', 'middle');
    s += text(1059, 849, '5X5', GOLD, 'note', 'middle') + text(1059, 864, 'a', '#000', 'note', 'middle');
    s += `<path d="M908 795L1127 811" stroke="${ORANGE}"/>`;

    [[1369, 1437, 305], [1369, 1437, 377], [1384, 1428, 421], [1311, 1380, 456], [1369, 1384, 490],
     [1384, 1418, 492], [1316, 1368, 527], [1311, 1369, 597], [1311, 1369, 627]]
        .forEach(([a, b, y]) => { s += hline(a, b, y, ORANGE, DASH); });
    s += text(1374, 372, '1,4064', GOLD, 'small') + text(1400, 416, '1,3950', GOLD, 'small') + text(1316, 451, '13', GOLD, 'small');
    s += hline(1384, 1419, 461, '#f00') + hline(1277, 1297, 596, '#f00') + hline(1306, 1326, 614, '#008000');

    // time projections
    [1374, 1379].forEach(x => { s += vline(x, 88, 988, '#999', '1 3'); });
    [1408, 1442, 1457, 1461].forEach(x => { s += vline(x, 88, 988, '#999', '4 4'); });
    [[1371, '14 Nov. 2022'], [1375, '23 Nov. 2022'], [1404, '5 Dez. 2022'], [1438, '14 Dez. 2022'],
     [1453, '19 Dez. 2022'], [1457, '20 Dez. 2022']].forEach(([x, d]) => {
        s += `<text class="date" transform="translate(${x} 986) rotate(-90)">${d}</text>`;
    });

    [[1175, 746], [1223, 667], [1262, 623], [1311, 638], [1384, 447]].forEach(([x, y]) => {
        s += `<path d="M${x + 0.5} ${y}l4 4h-2v5h-4v-5h-2z" fill="#2cb42c" stroke="#585" stroke-width="0.5"/>`;
    });
    s += `<path d="M1286.5 567l4-4h-2v-5h-4v5h-2z" fill="#f00"/>`;
    s += text(3, 985, 'ProRealTime', '#000', 'note');
    put('plot', 0, 88, s);
}

function drawAxes() {
    let s = '';
    for (let i = 0; i < 12; i++) {
        const y = Math.round(95 + i * 76.64);
        const price = String(+(1.48 - i * 0.02).toFixed(2)).replace('.', ',');
        s += hline(1840, 1844, y, '#aaa') + text(1847, y + 4, price);
    }
    s += rect(1844.5, 411.5, 32, 14, '#ffcc22', 'stroke="#cca010"') + hline(1840, 1844, 418, '#000');
    s += text(1861, 422, '1,3954', '#000', 'small', 'middle');
    put('price-axis', 1840, 88, s);

    s = '';
    [[23, 'Nov.'], [972, 'Aug.'], [1084, 'Sept.'], [1191, 'Okt.'], [1292, 'Nov.'], [1398, 'Dez.'], [1505, '2023'],
     [1613, 'Feb.'], [1710, 'März'], [1822, 'Apr.']].forEach(([x, label]) => {
        s += vline(x, 0, 3, '#aaa') + text(x, 14, label, '#000', '', 'middle');
    });
    put('time-axis', 0, 0, s);
}

function drawMini() {
    const grey = '#aeb0b6';
    let s = '';
    for (let i = 0; i < 14; i++) {
        const y = Math.round(978 + i * 39.56);
        s += hline(69, 891, y, '#dcdee6');
        if (i) {
            s += hline(891, 896, y, grey) + text(902, y + 4, '1,' + (41 - i) + '000', grey, 'num');
        }
    }
    s += rect(189, 941, 7, 549, '#fafafa');
    [[240, 'Sep'], [418, 'Okt'], [588, 'Nov']].forEach(([x, m]) => {
        s += vline(x, 941, 1511, '#dcdee6') + rect(x - 11, 1494, 24, 14, '#fff') + text(x, 1505, m, grey, 'num', 'middle');
    });
    s += vline(891, 941, 1511, '#dcdee6');
    RECENT.forEach(([hi, top, bot, lo, up], i) => {
        const x = Math.floor(71.3 + i * 8.071);
        s += rect(x, hi, 1, lo - hi, up ? '#3b8f6a' : '#cc4a5e');
        s += rect(x - 2, top, 5, bot - top, up ? '#24a06b' : '#f22a48');
    });
    // crosshair and tags
    s += vline(188, 941, 1490, '#777') + hline(69, 891, 1074, '#777');
    s += `<path d="M891 977l8-10h57v19h-57z" fill="#24a06b"/>` + text(902, 981, '1,41074', '#000', 'num');
    s += `<path d="M891 1075l8-10h57v19h-57z"/>` + text(902, 1079, '1,38593', '#fff', 'num');
    s += rect(153, 1490, 78, 21, '#000') + text(192, 1505, '24.08.2022', '#fff', 'num', 'middle') + vline(192, 1508, 1511, '#fff');
    put('mini', 69, 941, s);
}

// limit and stop order buttons: arrow directions top/bottom plus the order line shape
const ORDER = {
    limit: [['down', 'up', 'M14 13h12v5H14zM14 20h12v5H14z'], ['down', 'up', 'M14 13h12v12H14zM14 25l12-12']],
    stop: [['up', 'down', 'M14 13h12v5H14zM14 20h12v5H14z'], ['up', 'down', 'M14 13h12v12H14zM14 25l12-12'], ['up', 'down', 'M14 13h12v12H14zM14 17h9v4h-6v4']]
};
Object.entries(ORDER).forEach(([id, list]) => {
    document.getElementById(id).innerHTML = list.map(([a, b, d], i) => `<button aria-label="${id} ${i + 1}"><svg width="28" height="28" viewBox="0 0 28 28">
        <use href="#i-page"/><use href="#i-${a}" x="2" y="2" width="10" height="11" fill="${a === 'up' ? '#1b1' : '#e33'}"/>
        <use href="#i-${b}" x="2" y="14" width="10" height="11" fill="${b === 'up' ? '#1b1' : '#e33'}"/>
        <path d="${d}" fill="#fff" stroke="#7b8a91" stroke-width="1.5"/></svg></button>`).join('');
});

drawPlot();
drawAxes();
drawMini();
```
